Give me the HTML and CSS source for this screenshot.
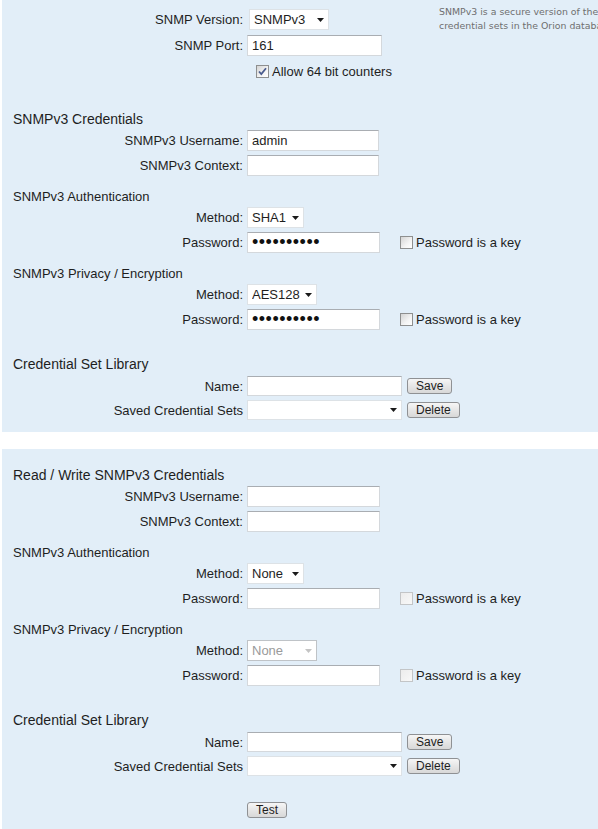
FILE: index.html
```html
<!DOCTYPE html>
<html>
<head>
<meta charset="utf-8">
<title>SNMPv3 Credentials</title>
<link rel="stylesheet" href="styles.css">
</head>
<body>
<div class="panel p1">
  <div class="top">
    <div class="topform">
      <div class="row">
        <label class="lbl">SNMP Version:</label>
        <span class="sel w80 ml2"><select><option>SNMPv3</option></select><svg class="arr" width="7" height="4" viewBox="0 0 7 4"><path d="M0 0H7L3.5 4Z"/></svg></span>
      </div>
      <div class="row mt1">
        <label class="lbl">SNMP Port:</label>
        <input class="txt w135 ml2" type="text" value="161">
      </div>
      <div class="row mt1">
        <span class="lbl"></span>
        <label class="cb ml9"><span class="cbx"><input type="checkbox" checked><svg class="tick" width="13" height="13" viewBox="0 0 13 13"><path d="M3 6.5L5.3 9L10 3.2"/></svg></span>Allow 64 bit counters</label>
      </div>
    </div>
    <div class="note">SNMPv3 is a secure version of the<br>credential sets in the Orion database</div>
  </div>

  <div class="h1 mt27">SNMPv3 Credentials</div>
  <div class="row mt1"><label class="lbl">SNMPv3 Username:</label><input class="txt w132 ml1" type="text" value="admin"></div>
  <div class="row"><label class="lbl">SNMPv3 Context:</label><input class="txt w132 ml1" type="text" value=""></div>

  <div class="h2 mt11">SNMPv3 Authentication</div>
  <div class="row"><label class="lbl">Method:</label><span class="sel w57"><select><option>SHA1</option></select><svg class="arr" width="7" height="4" viewBox="0 0 7 4"><path d="M0 0H7L3.5 4Z"/></svg></span></div>
  <div class="row"><label class="lbl">Password:</label><input class="txt pwd w133" type="password" value="abcdefghij"><label class="cb key"><span class="cbx"><input type="checkbox"></span>Password is a key</label></div>

  <div class="h2 mt11">SNMPv3 Privacy / Encryption</div>
  <div class="row"><label class="lbl">Method:</label><span class="sel w70"><select><option>AES128</option></select><svg class="arr" width="7" height="4" viewBox="0 0 7 4"><path d="M0 0H7L3.5 4Z"/></svg></span></div>
  <div class="row"><label class="lbl">Password:</label><input class="txt pwd w133" type="password" value="abcdefghij"><label class="cb key"><span class="cbx"><input type="checkbox"></span>Password is a key</label></div>

  <div class="h1 mt24">Credential Set Library</div>
  <div class="row lib mt2"><label class="lbl">Name:</label><input class="txt w155 h20" type="text" value=""><button class="btn">Save</button></div>
  <div class="row lib"><label class="lbl">Saved Credential Sets</label><span class="sel w155 h20"><select><option></option></select><svg class="arr" width="7" height="4" viewBox="0 0 7 4"><path d="M0 0H7L3.5 4Z"/></svg></span><button class="btn">Delete</button></div>
</div>

<div class="panel p2">
  <div class="h1">Read / Write SNMPv3 Credentials</div>
  <div class="row mt1"><label class="lbl">SNMPv3 Username:</label><input class="txt w133" type="text" value=""></div>
  <div class="row"><label class="lbl">SNMPv3 Context:</label><input class="txt w133" type="text" value=""></div>

  <div class="h2 mt11">SNMPv3 Authentication</div>
  <div class="row"><label class="lbl">Method:</label><span class="sel w57"><select><option>None</option></select><svg class="arr" width="7" height="4" viewBox="0 0 7 4"><path d="M0 0H7L3.5 4Z"/></svg></span></div>
  <div class="row"><label class="lbl">Password:</label><input class="txt w133" type="password" value=""><label class="cb key"><span class="cbx dim"><input type="checkbox"></span>Password is a key</label></div>

  <div class="h2 mt11">SNMPv3 Privacy / Encryption</div>
  <div class="row"><label class="lbl">Method:</label><span class="sel w70 off"><select disabled><option>None</option></select><svg class="arr" width="7" height="4" viewBox="0 0 7 4"><path d="M0 0H7L3.5 4Z"/></svg></span></div>
  <div class="row"><label class="lbl">Password:</label><input class="txt w133" type="password" value=""><label class="cb key"><span class="cbx dim"><input type="checkbox"></span>Password is a key</label></div>

  <div class="h1 mt24">Credential Set Library</div>
  <div class="row lib mt2"><label class="lbl">Name:</label><input class="txt w155 h20" type="text" value=""><button class="btn">Save</button></div>
  <div class="row lib"><label class="lbl">Saved Credential Sets</label><span class="sel w155 h20"><select><option></option></select><svg class="arr" width="7" height="4" viewBox="0 0 7 4"><path d="M0 0H7L3.5 4Z"/></svg></span><button class="btn">Delete</button></div>

  <div class="row lib mt20"><span class="lbl"></span><button class="btn test">Test</button></div>
</div>
</body>
</html>
```

FILE: styles.css
```css
html, body {
  margin: 0;
  padding: 0;
  background: #ffffff;
}

body {
  font-family: "Liberation Sans", Arial, sans-serif;
  font-size: 13px;
  color: #1e1e1e;
  overflow: hidden;
}

.panel {
  background: #e2eef8;
  margin-left: 2px;
  overflow: hidden;
}

.p1 {
  padding: 0 0 10px 0;
}

.p2 {
  margin-top: 17px;
  padding: 18px 0 20px 0;
}

.top {
  display: flex;
  align-items: flex-start;
}

.topform {
  width: 437px;
  flex: none;
  padding-top: 7px;
}

.note {
  flex: 1 1 auto;
  min-width: 0;
  overflow: hidden;
  white-space: nowrap;
  font-family: "DejaVu Sans", Verdana, sans-serif;
  font-size: 9.4px;
  line-height: 14px;
  color: #6f6f6f;
  padding-top: 5px;
}

.row {
  display: flex;
  align-items: center;
  height: 25px;
}

.row.lib {
  height: 24px;
}

.lbl {
  flex: none;
  width: 241px;
  margin-right: 4px;
  text-align: right;
  white-space: nowrap;
}

.h1 {
  font-size: 14px;
  line-height: 16px;
  padding-left: 11px;
}

.h2 {
  font-size: 13px;
  line-height: 16px;
  padding-left: 11px;
}

.mt1 { margin-top: 1px; }
.mt2 { margin-top: 2px; }
.mt11 { margin-top: 11px; }
.mt20 { margin-top: 20px; }
.mt24 { margin-top: 24px; }
.mt27 { margin-top: 27px; }
.ml1 { margin-left: 1px; }
.ml2 { margin-left: 2px; }
.ml9 { margin-left: 9px; }

.txt {
  box-sizing: border-box;
  height: 21px;
  margin: 0;
  padding: 0 4px;
  border: 1px solid #d4d8dc;
  border-top-color: #a9adb2;
  background: #ffffff;
  font-family: "Liberation Sans", Arial, sans-serif;
  font-size: 13px;
  color: #1e1e1e;
  outline: none;
}

.txt.h20 { height: 20px; }

.pwd {
  font-size: 18px;
  letter-spacing: 0.5px;
  color: #111111;
}

.w132 { width: 132px; }
.w133 { width: 133px; }
.w135 { width: 135px; }
.w155 { width: 155px; }
.w57 { width: 57px; }
.w70 { width: 70px; }
.w80 { width: 80px; }

.sel {
  display: inline-grid;
  align-items: center;
  height: 21px;
  flex: none;
}

.sel.h20 { height: 20px; }

.sel > select,
.sel > .arr {
  grid-area: 1 / 1;
}

.sel > select {
  -webkit-appearance: none;
  appearance: none;
  box-sizing: border-box;
  width: 100%;
  height: 100%;
  margin: 0;
  padding: 0 14px 0 4px;
  border: 1px solid #dde2e6;
  border-radius: 0;
  background: #ffffff;
  font-family: "Liberation Sans", Arial, sans-serif;
  font-size: 13px;
  color: #1e1e1e;
  outline: none;
}

.sel > .arr {
  justify-self: end;
  margin-right: 5px;
  fill: #1a1a1a;
  pointer-events: none;
}

.sel.off > select {
  border-color: #bfc3c7;
  color: #9a9a9a;
  opacity: 1;
}

.sel.off > .arr {
  fill: #c4c4c4;
}

.cb {
  display: inline-flex;
  align-items: center;
  white-space: nowrap;
}

.cb.key {
  margin-left: 20px;
}

.cbx {
  display: inline-grid;
  margin-right: 3px;
}

.cbx > input,
.cbx > .tick {
  grid-area: 1 / 1;
}

.cbx > input {
  -webkit-appearance: none;
  appearance: none;
  box-sizing: border-box;
  width: 13px;
  height: 13px;
  margin: 0;
  border: 1px solid #8e8f8f;
  background: linear-gradient(135deg, #d4d4d4 0%, #f4f4f4 60%, #ffffff 100%);
  border-radius: 0;
}

.cbx.dim > input {
  border-color: #c3c5c7;
  background: linear-gradient(135deg, #ececec 0%, #f8f8f8 100%);
}

.cbx > .tick {
  fill: none;
  stroke: #4a5c8e;
  stroke-width: 1.8;
  pointer-events: none;
}

.btn {
  box-sizing: border-box;
  height: 16px;
  margin: 0 0 0 5px;
  padding: 0 8px;
  border: 1px solid #8f9194;
  border-radius: 3px;
  background: linear-gradient(#f6f6f6, #e6e6e6 50%, #d8d8d8);
  font-family: "Liberation Sans", Arial, sans-serif;
  font-size: 12px;
  line-height: 14px;
  color: #1e1e1e;
}

.btn.test {
  margin-left: 0;
}
```
